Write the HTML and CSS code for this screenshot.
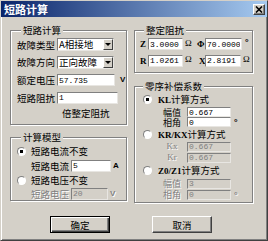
FILE: index.html
```html
<!DOCTYPE html>
<html lang="zh">
<head>
  <meta charset="UTF-8">
  <title>短路计算</title>
  <link rel="stylesheet" href="styles.css">
</head>
<body>
  <div class="window">
    <div class="titlebar">
      <span class="title">短路计算</span>
      <button class="close" aria-label="关闭">
        <svg width="8" height="7" viewBox="0 0 8 7"><path d="M1 0.5 L7 6.5 M7 0.5 L1 6.5" stroke="#000" stroke-width="1.6"/></svg>
      </button>
    </div>

    <div class="panes">
      <div class="col col-left">
        <fieldset class="group g-calc">
          <legend>短路计算</legend>
          <div class="row h17">
            <span class="lbl">故障类型</span>
            <div class="combo"><span class="combo-text">A相接地</span><span class="combo-btn"><i class="arrow"></i></span></div>
          </div>
          <div class="row h18">
            <span class="lbl">故障方向</span>
            <div class="combo"><span class="combo-text">正向故障</span><span class="combo-btn"><i class="arrow"></i></span></div>
          </div>
          <div class="row h18">
            <span class="lbl">额定电压</span>
            <input type="text" class="field w58" value="57.735">
            <span class="unit u-v">V</span>
          </div>
          <div class="row h17">
            <span class="lbl">短路阻抗</span>
            <input type="text" class="field w61" value="1">
          </div>
          <div class="row h14 note">倍整定阻抗</div>
        </fieldset>

        <fieldset class="group g-model">
          <legend>计算模型</legend>
          <label class="row h16 opt">
            <input type="radio" name="model" checked>
            <span>短路电流不变</span>
          </label>
          <div class="row h13 sub">
            <span class="lbl">短路电流</span>
            <input type="text" class="field w40" value="5">
            <span class="unit u-a">A</span>
          </div>
          <label class="row h16 opt">
            <input type="radio" name="model">
            <span>短路电压不变</span>
          </label>
          <div class="row h11 sub off">
            <span class="lbl">短路电压</span>
            <input type="text" class="field w37" value="20" disabled>
            <span class="unit u-a">V</span>
          </div>
        </fieldset>
      </div>

      <div class="col col-right">
        <fieldset class="group g-imp">
          <legend>整定阻抗</legend>
          <div class="row h16 pair">
            <span class="sym">Z</span>
            <input type="text" class="field w35" value="3.0000">
            <span class="ohm">Ω</span>
            <span class="sym">Φ</span>
            <input type="text" class="field w37" value="70.0000">
            <span class="deg top">°</span>
          </div>
          <div class="row h17 pair">
            <span class="sym">R</span>
            <input type="text" class="field w35" value="1.0261">
            <span class="ohm">Ω</span>
            <span class="sym x">X</span>
            <input type="text" class="field w36" value="2.8191">
            <span class="ohm">Ω</span>
          </div>
        </fieldset>

        <fieldset class="group g-zero">
          <legend>零序补偿系数</legend>
          <label class="row h15 opt">
            <input type="radio" name="zero" checked>
            <span><b>KL</b>计算方式</span>
          </label>
          <div class="row h10 sub">
            <span class="lbl">幅值</span>
            <input type="text" class="field small" value="0.667">
          </div>
          <div class="row h10 sub">
            <span class="lbl">相角</span>
            <input type="text" class="field small" value="0">
            <span class="deg">°</span>
          </div>
          <label class="row h14 opt">
            <input type="radio" name="zero">
            <span><b>KR/KX</b>计算方式</span>
          </label>
          <div class="row h11 sub off">
            <span class="lbl latin">Kx</span>
            <input type="text" class="field small" value="0.667" disabled>
          </div>
          <div class="row h11 sub off">
            <span class="lbl latin">Kr</span>
            <input type="text" class="field small" value="0.667" disabled>
          </div>
          <label class="row h15 opt">
            <input type="radio" name="zero">
            <span><b>Z0/Z1</b>计算方式</span>
          </label>
          <div class="row h11 sub off">
            <span class="lbl">幅值</span>
            <input type="text" class="field small" value="3" disabled>
          </div>
          <div class="row h11 sub off">
            <span class="lbl">相角</span>
            <input type="text" class="field small" value="0" disabled>
            <span class="deg">°</span>
          </div>
        </fieldset>
      </div>
    </div>

    <div class="actions">
      <button class="btn default">确定</button>
      <button class="btn">取消</button>
    </div>
  </div>
</body>
</html>
```

FILE: styles.css
```css
* {
  box-sizing: border-box;
}

html, body {
  margin: 0;
  background: #d4d0c8;
}

.window {
  width: 268px;
  height: 241px;
  border: 1px solid;
  border-color: #d4d0c8 #404040 #404040 #d4d0c8;
  box-shadow: inset 1px 1px #fff, inset -1px -1px #808080;
  font-family: "Noto Sans CJK SC", sans-serif;
  font-size: 9.5px;
  color: #000;
}

.titlebar {
  height: 16px;
  display: flex;
  align-items: center;
  justify-content: space-between;
  padding: 0 2px 0 3px;
  background: linear-gradient(to right, #0a246a, #a6caf0);
}

.title {
  color: #fff;
  font-weight: bold;
  font-size: 11px;
  line-height: 1;
}

.close {
  width: 12px;
  height: 11px;
  padding: 0;
  display: flex;
  align-items: center;
  justify-content: center;
  background: #d4d0c8;
  border: 1px solid;
  border-color: #fff #404040 #404040 #fff;
  box-shadow: inset -1px -1px #808080;
}

.panes {
  display: flex;
  gap: 7px;
  padding: 7px 0 0 9px;
}

.col-left {
  width: 117px;
}

.col-right {
  width: 119px;
}

.group {
  margin: 0;
  padding: 0;
  min-inline-size: 0;
  border: 1px solid #808080;
  box-shadow: 1px 1px 0 #fff, inset 1px 1px 0 #fff;
}

.group legend {
  padding: 0 2px;
  height: 12px;
  line-height: 12px;
  background: #d4d0c8;
}

.g-calc legend,
.g-model legend,
.g-imp legend {
  margin-left: 4px;
}

.g-calc {
  padding: 0 0 4px 6px;
}

.g-model {
  margin-top: 6px;
  padding: 0 0 1px 6px;
}

.g-imp {
  padding: 0 0 3px 5px;
}

.g-zero {
  margin-top: 7px;
  padding: 0 0 2px 8px;
}

.row {
  display: flex;
  align-items: center;
  line-height: 10px;
  white-space: nowrap;
}

.h10 { height: 10px; }
.h11 { height: 11px; }
.h13 { height: 13px; }
.h14 { height: 14px; }
.h15 { height: 15px; }
.h16 { height: 16px; }
.h17 { height: 17px; }
.h18 { height: 18px; }

.lbl {
  width: 40px;
  flex: none;
}

.note {
  padding-left: 45px;
}

/* text boxes */
.field {
  height: 12px;
  margin: 0;
  padding: 0 1px;
  border: 1px solid;
  border-color: #808080 #e8e6e2 #e8e6e2 #808080;
  background: #fff;
  font-family: "Liberation Mono", monospace;
  font-size: 8px;
  line-height: 10px;
  color: #000;
  outline: none;
}

.field:disabled {
  background: #d4d0c8;
  color: #808080;
}

.w35 { width: 35px; }
.w36 { width: 36px; }
.w37 { width: 37px; }
.w40 { width: 40px; }
.w58 { width: 58px; }
.w61 { width: 61px; }

.field.small {
  width: 44px;
  height: 10px;
  line-height: 8px;
}

/* drop-down */
.combo {
  width: 57px;
  height: 13px;
  display: flex;
  background: #fff;
  border: 1px solid;
  border-color: #808080 #e8e6e2 #e8e6e2 #808080;
}

.combo-text {
  flex: 1;
  padding-left: 1px;
  line-height: 11px;
}

.combo-btn {
  width: 10px;
  display: flex;
  align-items: center;
  justify-content: center;
  background: #d4d0c8;
  border: 1px solid;
  border-color: #fff #404040 #404040 #fff;
}

.arrow {
  border-left: 3px solid transparent;
  border-right: 3px solid transparent;
  border-top: 3px solid #000;
}

.unit {
  font-family: "Liberation Sans", sans-serif;
  font-weight: bold;
  font-size: 8px;
}

.u-v {
  margin-left: 5px;
}

.u-a {
  margin-left: 2px;
}

/* radio options */
.opt input {
  appearance: none;
  width: 9px;
  height: 9px;
  margin: 0 5px 0 0;
  border-radius: 50%;
  border: 1px solid;
  border-color: #808080 #fff #fff #808080;
  background: #fff;
}

.opt input:checked {
  background: radial-gradient(circle, #000 0 1.5px, #fff 2px);
}

.opt b {
  font-family: "Liberation Serif", serif;
  font-size: 9px;
}

.g-zero .opt input {
  margin-right: 6px;
}

.sub {
  padding-left: 14px;
}

.g-zero .sub {
  padding-left: 16px;
}

.g-zero .lbl {
  width: 26px;
  font-size: 9px;
  line-height: 9px;
  text-align: center;
}

.g-zero .field {
  margin-left: 2px;
}

.lbl.latin {
  font-family: "Liberation Serif", serif;
}

.off {
  color: #808080;
  text-shadow: 1px 1px #fff;
}

/* impedance pairs */
.sym {
  width: 8px;
  flex: none;
  font-family: "Liberation Serif", serif;
  font-weight: bold;
  font-size: 9px;
}

.sym.x {
  text-indent: 2px;
}

.ohm {
  width: 14px;
  flex: none;
  padding-left: 2px;
  font-family: "Liberation Serif", serif;
  font-size: 9px;
  align-self: flex-start;
  margin-top: 2px;
}

.deg {
  padding-left: 3px;
  font-family: "Liberation Sans", sans-serif;
  font-weight: bold;
  font-size: 9px;
}

.deg.top {
  align-self: flex-start;
  margin-top: 1px;
}

/* buttons */
.actions {
  display: flex;
  gap: 42px;
  margin-top: 13px;
  padding-left: 49px;
}

.btn {
  width: 60px;
  height: 17px;
  padding: 0;
  background: #d4d0c8;
  border: 1px solid;
  border-color: #fff #404040 #404040 #fff;
  box-shadow: inset -1px -1px #808080;
  font-family: "Noto Sans CJK SC", sans-serif;
  font-size: 9.5px;
  color: #000;
}

.btn.default {
  border-color: #000;
  box-shadow: inset 1px 1px #fff, inset -1px -1px #404040, inset -2px -2px #808080;
}
```
